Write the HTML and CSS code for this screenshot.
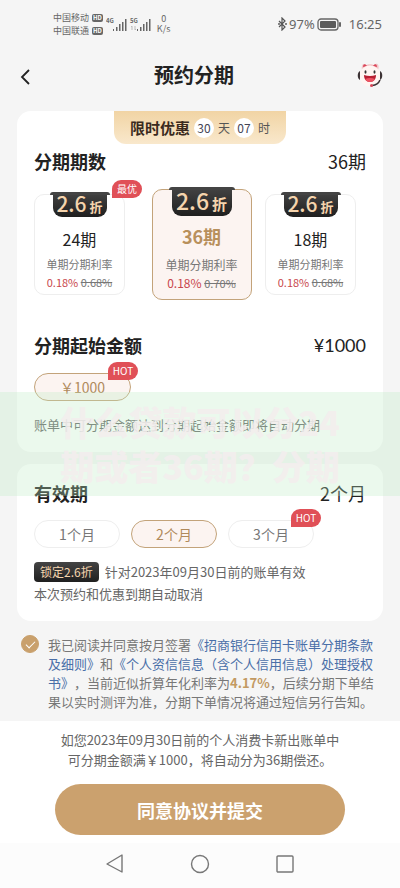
FILE: index.html
```html
<!DOCTYPE html>
<html lang="zh-CN">
<head>
  <meta charset="UTF-8">
  <meta name="viewport" content="width=device-width, initial-scale=1">
  <title>预约分期</title>
  <link rel="stylesheet" href="styles.css">
</head>
<body>
  <div class="status-bar">
    <div class="carriers">
      <div class="carrier">中国移动 <span class="hd">HD</span></div>
      <div class="carrier">中国联通 <span class="hd">HD</span></div>
    </div>
    <svg class="signals" width="46" height="18" viewBox="0 0 46 18">
      <g fill="#666">
        <path d="M7 14h1v2H7zM10 12h1.500v4H10zM13 9h1.500v7H13zM16 7h1.500v9H16zM19 4h1.500v12H19z"/>
        <path d="M31 14h1v2h-1zM34 12h1.500v4H34zM37 9h1.500v7H37zM40 7h1.500v9H40zM43 4h1.500v12H43z"/>
        <text x="0" y="8" font-size="6" font-weight="700">4G</text>
        <text x="24" y="8" font-size="6" font-weight="700">5G</text>
      </g>
      <path d="M26 15v-4m-1 1l1-1M29 11v4m1-1l-1 1" stroke="#bbb" fill="none"/>
    </svg>
    <div class="speed"><span>0</span><span>K/s</span></div>
    <div class="status-right">
      <svg width="9" height="14" viewBox="0 0 9 14" fill="none" stroke="#555" stroke-width="1.2">
        <path d="M1 4l6 6-3 3V1l3 3-6 6"/>
        <circle cx="8" cy="7" r=".4"/><circle cx="1" cy="7" r=".4"/>
      </svg>
      <span>97%</span>
      <svg width="25" height="13" viewBox="0 0 25 13">
        <rect x="1" y="1" width="20" height="11" rx="3" fill="none" stroke="#666" stroke-width="1.3"/>
        <rect x="3" y="3" width="16" height="7" rx="1" fill="#5c5c5c"/>
        <rect x="22" y="4" width="2" height="5" rx="1" fill="#666"/>
      </svg>
      <span class="clock">16:25</span>
    </div>
  </div>

  <header class="header">
    <button class="icon-btn" type="button" aria-label="返回">
      <svg width="12" height="16" viewBox="0 0 12 16" fill="none" stroke="#222" stroke-width="1.8"><path d="M9 1L2 8l7 7"/></svg>
    </button>
    <h1>预约分期</h1>
    <button class="icon-btn" type="button" aria-label="客服">
      <svg width="28" height="28" viewBox="0 0 28 28">
        <path d="M6 9c-1-6 2-7 4-5 2-1 6-1 8 0 3-3 6 0 4 5z" fill="#f3c3c6"/>
        <path d="M7 6c0-3 2-4 4-1zM17 5c2-3 4-2 4 1zM12 5h4l-2 3z" fill="#d9475a"/>
        <circle cx="14" cy="15" r="10.5" fill="#fff5f2"/>
        <ellipse cx="9.500" cy="11" rx="1" ry="1.700" fill="#333"/>
        <ellipse cx="18.500" cy="11" rx="1" ry="1.700" fill="#333"/>
        <path d="M8 14q6 2 12 0c0 4-2 7-6 7s-6-3-6-7z" fill="#b81f32"/>
        <path d="M9 18q5-2 10 0c-1 2-3 3-5 3s-4-1-5-3z" fill="#ee5363"/>
        <path d="M4 10c-3 1-3 8 0 9zM24 10c3 1 3 8 0 9z" fill="#3c3335"/>
        <path d="M24 19q-2 5-8 5.500" fill="none" stroke="#3c3335" stroke-width="1.500"/>
        <circle cx="15.500" cy="24.500" r="1.500" fill="#d9475a"/>
      </svg>
    </button>
  </header>

  <form class="form">
    <section class="card">
      <div class="countdown"><strong>限时优惠</strong><b>30</b>天<b>07</b>时</div>
      <div class="row">
        <h2>分期期数</h2>
        <span class="value">36期</span>
      </div>
      <div class="plans">
        <label class="plan">
          <input type="radio" name="plan" value="24">
          <span class="badge">最优</span>
          <span class="discount"><b>2.6</b>折</span>
          <span class="plan-name">24期</span>
          <span class="plan-label">单期分期利率</span>
          <span class="plan-rate">0.18% <del>0.68%</del></span>
        </label>
        <label class="plan plan-main">
          <input type="radio" name="plan" value="36" checked>
          <span class="discount"><b>2.6</b>折</span>
          <span class="plan-name">36期</span>
          <span class="plan-label">单期分期利率</span>
          <span class="plan-rate">0.18% <del>0.70%</del></span>
        </label>
        <label class="plan">
          <input type="radio" name="plan" value="18">
          <span class="discount"><b>2.6</b>折</span>
          <span class="plan-name">18期</span>
          <span class="plan-label">单期分期利率</span>
          <span class="plan-rate">0.18% <del>0.68%</del></span>
        </label>
      </div>

      <div class="row">
        <h2>分期起始金额</h2>
        <span class="value amount">¥1000</span>
      </div>
      <div class="pills amounts">
        <label class="pill pill-wide">
          <input type="radio" name="amount" value="1000" checked>
          <span class="badge">HOT</span>￥1000
        </label>
      </div>
      <p class="note">账单中可分期金额达到分期起始金额即将自动分期</p>
    </section>

    <section class="card card-period">
      <div class="row">
        <h2>有效期</h2>
        <span class="value">2个月</span>
      </div>
      <div class="pills periods">
        <label class="pill"><input type="radio" name="period" value="1">1个月</label>
        <label class="pill"><input type="radio" name="period" value="2" checked>2个月</label>
        <label class="pill"><input type="radio" name="period" value="3"><span class="badge">HOT</span>3个月</label>
      </div>
      <p class="note"><span class="lock">锁定2.6折</span>针对2023年09月30日前的账单有效<br>本次预约和优惠到期自动取消</p>
    </section>

    <div class="agree">
      <input type="checkbox" id="agree" checked>
      <label for="agree">我已阅读并同意按月签署<a href="#">《招商银行信用卡账单分期条款及细则》</a>和<a href="#">《个人资信信息（含个人信用信息）处理授权书》</a>，当前近似折算年化利率为<b>4.17%</b>，后续分期下单结果以实时测评为准，分期下单情况将通过短信另行告知。</label>
    </div>

    <div class="submit-area">
      <p>如您2023年09月30日前的个人消费卡新出账单中<br>可分期金额满￥1000，将自动分为36期偿还。</p>
      <button class="submit" type="submit">同意协议并提交</button>
    </div>
  </form>

  <nav class="nav-bar">
    <button class="icon-btn" type="button" aria-label="后退">
      <svg width="20" height="20" viewBox="0 0 20 20" fill="none" stroke="#777" stroke-width="1.4" stroke-linejoin="round"><path d="M17 1v17L2 10z"/></svg>
    </button>
    <button class="icon-btn" type="button" aria-label="主页">
      <svg width="20" height="20" viewBox="0 0 20 20" fill="none" stroke="#777" stroke-width="1.4"><circle cx="10" cy="10" r="8.500"/></svg>
    </button>
    <button class="icon-btn" type="button" aria-label="最近任务">
      <svg width="20" height="20" viewBox="0 0 20 20" fill="none" stroke="#777" stroke-width="1.4"><rect x="2" y="2" width="16" height="16" rx="1"/></svg>
    </button>
  </nav>

  <div class="watermark">什么贷款可以分24<br>期或者36期？分期</div>
</body>
</html>
```

FILE: styles.css
```css
* {
  box-sizing: border-box;
}

body {
  position: relative;
  margin: 0;
  min-height: 100vh;
  display: flex;
  flex-direction: column;
  background: #f5f5f5;
  color: #222;
  font-family: "Noto Sans CJK SC", sans-serif;
  text-spacing-trim: space-all;
}

h1, h2, p {
  margin: 0;
}

button {
  font-family: inherit;
}

/* status bar */
.status-bar {
  display: flex;
  align-items: center;
  height: 48px;
  padding: 0 18px 0 53px;
  color: #666;
}

.carrier {
  display: flex;
  align-items: center;
  gap: 3px;
  font-size: 9px;
  line-height: 13px;
  white-space: nowrap;
}

.hd {
  padding: 0 1px;
  border-radius: 2px;
  background: #666;
  color: #fff;
  font-size: 6px;
  font-weight: bold;
  line-height: 8px;
}

.signals {
  margin-left: 3px;
}

.speed {
  display: flex;
  flex-direction: column;
  align-items: center;
  margin-left: 5px;
  font-size: 9px;
  line-height: 10px;
}

.status-right {
  display: flex;
  align-items: center;
  gap: 2px;
  margin-left: auto;
  font-family: "Noto Sans", sans-serif;
  font-size: 13px;
}

.clock {
  margin-left: 5px;
}

/* header */
.header {
  display: flex;
  align-items: center;
  justify-content: space-between;
  height: 54px;
  padding: 0 16px 0 20px;
}

.header h1 {
  font-size: 20px;
  line-height: 28px;
}

.icon-btn {
  padding: 0;
  border: none;
  background: none;
  cursor: pointer;
}

.icon-btn svg {
  vertical-align: middle;
}

/* cards */
.form {
  flex: 1;
  display: flex;
  flex-direction: column;
  padding-top: 9px;
}

.card {
  margin: 0 17px 12px;
  padding: 0 17px 16px;
  border-radius: 14px;
  background: #fff;
}

.card-period {
  margin-bottom: 14px;
  padding-top: 15px;
}

.row {
  display: flex;
  align-items: center;
  justify-content: space-between;
  height: 28px;
}

.row h2 {
  font-size: 18px;
}

.value {
  font-size: 18px;
}

.amount {
  font-family: Lato, sans-serif;
}

.countdown {
  display: flex;
  align-items: center;
  justify-content: center;
  gap: 4px;
  width: 172px;
  height: 33px;
  margin: 0 auto 3px;
  border-radius: 0 0 12px 12px;
  background: linear-gradient(#f1d4a4, #f9e8cc);
  color: #555;
  font-size: 12px;
}

.countdown strong {
  color: #3a2a20;
  font-size: 15px;
}

.countdown b {
  width: 20px;
  height: 20px;
  border-radius: 50%;
  background: #fff;
  color: #445;
  font-weight: normal;
  line-height: 20px;
  text-align: center;
}

/* plans */
.plans {
  display: flex;
  align-items: center;
  justify-content: space-between;
  margin: 14px 10px 31px 0;
}

.plan {
  position: relative;
  display: flex;
  flex-direction: column;
  align-items: center;
  width: 91px;
  height: 101px;
  border: 1px solid #eee;
  border-radius: 10px;
  font-size: 11px;
  line-height: 18px;
  white-space: nowrap;
  cursor: pointer;
}

.plan-main {
  width: 100px;
  height: 111px;
  margin-left: 13px;
  font-size: 12px;
}

.plan input,
.pill input {
  position: absolute;
  opacity: 0;
}

.plan:has(input:checked),
.pill:has(input:checked) {
  border-color: #c3a37a;
  background: #fcf4f1;
}

.discount {
  position: relative;
  display: flex;
  align-items: baseline;
  justify-content: center;
  gap: 3px;
  width: 54px;
  height: 25px;
  margin-top: -3px;
  border-radius: 0 0 9px 9px;
  background: linear-gradient(#444, #1f1f1f);
  color: #f5d4ad;
  font-size: 13px;
  font-weight: bold;
  line-height: 23px;
}

.discount::before {
  content: "";
  position: absolute;
  top: 0;
  left: -3px;
  right: -3px;
  height: 3px;
  border-radius: 3px 3px 0 0;
  background: #444;
}

.discount b {
  font-weight: 500;
  font-size: 21px;
}

.plan-main .discount {
  width: 60px;
  height: 29px;
  font-size: 15px;
  line-height: 26px;
}

.plan-main .discount b {
  font-size: 23px;
}

.plan-name {
  margin: 11px 0 5px;
  font-size: 16px;
  line-height: 22px;
}

.plan-main .plan-name {
  margin: 9px 0;
  font-size: 18px;
}

.plan:has(input:checked) .plan-name {
  color: #b8905c;
  font-weight: bold;
}

.plan-label {
  color: #777;
}

.plan-rate {
  color: #c8464c;
}

.plan-rate del {
  color: #777;
  font-size: 11px;
}

.badge {
  position: absolute;
  top: -12px;
  right: -8px;
  width: 30px;
  height: 18px;
  border-radius: 9px 9px 9px 0;
  background: #e05057;
  color: #fff;
  font-size: 10px;
  line-height: 17px;
  text-align: center;
}

.plan .badge {
  top: -15px;
  right: -18px;
}

/* pills */
.pills {
  display: flex;
  gap: 11px;
}

.amounts {
  margin: 14px 0 13px;
}

.periods {
  margin: 13px 0;
}

.pill {
  position: relative;
  width: 86px;
  height: 28px;
  border: 1px solid #eee;
  border-radius: 14px;
  color: #777;
  font-size: 14px;
  line-height: 26px;
  text-align: center;
  cursor: pointer;
}

.pill:has(input:checked) {
  color: #b08a5c;
}

.pill-wide {
  width: 97px;
}

.note {
  color: #666;
  font-size: 13px;
  line-height: 22px;
}

.lock {
  display: inline-block;
  margin-right: 6px;
  padding: 0 6px;
  border-radius: 4px;
  background: linear-gradient(#444, #1f1f1f);
  color: #f5d4ad;
  font-size: 12px;
  line-height: 20px;
}

/* agreement */
.agree {
  display: flex;
  gap: 9px;
  padding: 0 18px 10px 21px;
  color: #777;
  font-size: 13px;
  line-height: 19px;
}

.agree input {
  flex: none;
  appearance: none;
  width: 18px;
  height: 18px;
  margin: 0;
  border: 1px solid #c9a06c;
  border-radius: 50%;
}

.agree input:checked {
  background: #c9a06c;
}

.agree input:checked::before {
  content: "";
  display: block;
  width: 8px;
  height: 4px;
  margin: 5px auto;
  border-left: 1px solid #fff;
  border-bottom: 1px solid #fff;
  transform: rotate(-45deg);
}

.agree a {
  color: #4a6fa8;
  text-decoration: none;
}

.agree b {
  color: #c39a62;
}

/* submit */
.submit-area {
  flex: 1;
  padding: 9px 55px 8px;
  background: #fff;
  color: #666;
  font-size: 13px;
  line-height: 20px;
  text-align: center;
}

.submit-area p {
  margin: 0 -20px;
}

.submit {
  width: 100%;
  height: 51px;
  margin-top: 14px;
  border: none;
  border-radius: 26px;
  background: #cba16e;
  color: #fff;
  font-size: 18px;
  font-weight: bold;
  cursor: pointer;
}

.nav-bar {
  display: flex;
  align-items: center;
  justify-content: space-between;
  height: 45px;
  padding: 0 105px 4px;
  background: #fcfcfc;
}

/* translucent band over the cards */
.watermark {
  position: absolute;
  top: 392px;
  left: 0;
  right: 0;
  height: 104px;
  padding-top: 8px;
  background: rgba(190, 235, 195, 0.3);
  color: rgba(243, 238, 238, 0.9);
  font-size: 34px;
  font-weight: 900;
  line-height: 44px;
  text-align: center;
  pointer-events: none;
}
```
